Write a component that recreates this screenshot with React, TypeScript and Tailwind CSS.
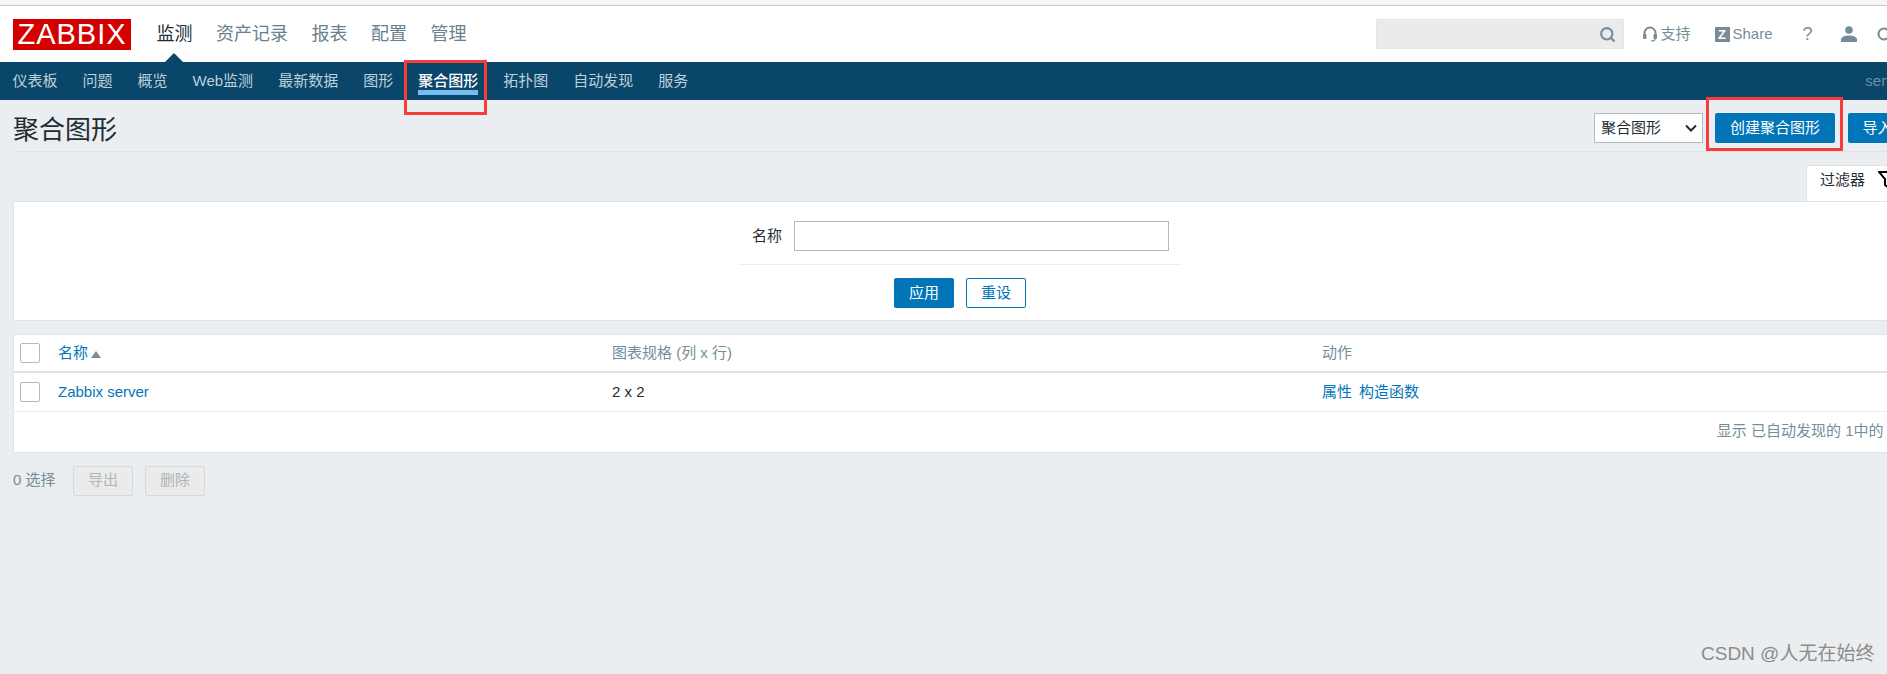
import { Search } from "lucide-react"

const topMenu = ["监测", "资产记录", "报表", "配置", "管理"]
const subMenu = ["仪表板", "问题", "概览", "Web监测", "最新数据", "图形", "聚合图形", "拓扑图", "自动发现", "服务"]

export default function App() {
  return (
    <div className="relative w-[1887px] h-[674px] overflow-hidden whitespace-nowrap bg-[#ebeef0] text-[15px] text-[#1f2c33] font-['Liberation_Sans','Noto_Sans_CJK_SC',sans-serif]">
      <div className="h-[6px] bg-[#f6f6f6] border-b border-[#c8c8c8]" />

      {/* top menu */}
      <header className="relative h-[56px] bg-white flex items-center pl-[13px]">
        <div className="shrink-0 w-[118px] h-[31px] bg-[#d40000] flex items-center justify-center text-white text-[29px] leading-none tracking-[1px]">
          ZABBIX
        </div>
        <nav className="shrink-0 flex ml-[25.5px] gap-[23.5px] text-[18px] text-[#69808d]">
          {topMenu.map((m, i) => (
            <a key={m} className={i === 0 ? "text-[#1f2c33]" : ""}>
              {m}
            </a>
          ))}
        </nav>
        <div className="absolute left-[165px] bottom-0 w-0 h-0 border-x-[9px] border-x-transparent border-b-[9px] border-b-[#0a466a]" />
        <div className="shrink-0 ml-[909px] w-[248px] h-[30px] bg-[#ebebeb] border border-[#e5e5e5] flex items-center justify-end pr-[7px]">
          <Search size={17} strokeWidth={3} className="text-[#768d99]" />
        </div>
        <div className="shrink-0 flex items-center ml-[19px] text-[#768d99] text-[15px]">
          <svg width="14" height="16" viewBox="0 0 14 16" fill="none">
            <path d="M1.5 10V7a5.5 5.5 0 0 1 11 0v3" stroke="#768d99" strokeWidth="2" />
            <rect x="0" y="8" width="3.5" height="5" rx="1" fill="#768d99" />
            <rect x="10.5" y="8" width="3.5" height="5" rx="1" fill="#768d99" />
            <path d="M12 13c0 1.5-2 2-4 2" stroke="#768d99" strokeWidth="1.2" />
          </svg>
          <span className="ml-[4px]">支持</span>
          <span className="ml-[24px] w-[15px] h-[15px] bg-[#768d99] text-white text-[13px] font-bold leading-[15px] text-center">
            Z
          </span>
          <span className="ml-[3px] text-[15px]">Share</span>
          <span className="ml-[30px] text-[18px] w-[10px]">?</span>
          <svg className="ml-[28px]" width="16" height="16" viewBox="0 0 16 16" fill="#768d99">
            <circle cx="8" cy="4" r="3.8" />
            <path d="M0 16v-2.5C0 11 4 9.5 8 9.5s8 1.5 8 4V16z" />
          </svg>
          <svg className="ml-[20px] shrink-0" width="14" height="16" viewBox="0 0 14 16" fill="none" stroke="#768d99" strokeWidth="2">
            <circle cx="7" cy="8" r="5.5" />
          </svg>
        </div>
      </header>

      {/* sub menu */}
      <nav className="h-[38px] w-[1907px] bg-[#0a466a] flex items-center text-[15px] text-[#bdd0da]">
        {subMenu.map((m) => (
          <a key={m} className={m === "聚合图形" ? "relative px-[12.5px] text-white font-medium" : "px-[12.5px]"}>
            {m}
            {m === "聚合图形" && <span className="absolute left-[12.5px] right-[12.5px] top-[20px] h-[5px] bg-[#74bdee]" />}
          </a>
        ))}
        <span className="ml-auto text-[#6f8fa3]">server</span>
      </nav>

      {/* title */}
      <div className="ml-[13px] w-[1894px] h-[52px] pt-[5px] flex items-center justify-between border-b border-[#dfe4e7]">
        <h1 className="text-[26px] leading-none mt-[4px]">聚合图形</h1>
        <div className="flex items-center">
          <div className="relative">
            <select className="block appearance-none w-[109px] h-[30px] bg-white border border-[#acbbc2] pl-[6px] text-[15px] text-[#1f2c33]">
              <option>聚合图形</option>
            </select>
            <svg className="absolute right-[6px] top-[11px]" width="12" height="8" viewBox="0 0 12 8" fill="none" stroke="#1f2c33" strokeWidth="2">
              <path d="M1 1.5l5 5 5-5" />
            </svg>
          </div>
          <button className="ml-[12px] w-[120px] h-[30px] rounded-[2px] bg-[#0275b8] text-white">创建聚合图形</button>
          <button className="ml-[13px] w-[59px] h-[30px] rounded-[2px] bg-[#0275b8] text-white">导入</button>
        </div>
      </div>

      {/* filter tab */}
      <div className="ml-[13px] w-[1894px] mt-[13px] flex justify-end">
        <div className="w-[101px] h-[36px] bg-white border-t border-l border-[#dfe4e7] rounded-tl-[2px] flex items-start pl-[13px] pt-[3px]">
          <span>过滤器</span>
          <svg className="ml-[13px] mt-[2px] shrink-0" width="18" height="18" viewBox="0 0 18 18" fill="none" stroke="#000" strokeWidth="2">
            <path d="M1 1h16l-6 7v9l-4-3V8z" />
          </svg>
        </div>
      </div>
      <section className="ml-[13px] w-[1894px] h-[120px] bg-white border border-[#dfe4e7] flex flex-col items-center pt-[19px]">
        <div className="w-[442px]">
          <div className="flex items-center pl-[13px] pb-[13px] border-b border-[#ebeef0]">
            <label className="w-[30px]">名称</label>
            <input className="ml-[12px] w-[375px] h-[30px] bg-white border border-[#acbbc2]" />
          </div>
          <div className="flex justify-center gap-[12px] mt-[13px]">
            <button className="w-[60px] h-[30px] rounded-[2px] bg-[#0275b8] text-white">应用</button>
            <button className="w-[60px] h-[30px] rounded-[2px] bg-white border border-[#0275b8] text-[#0275b8]">重设</button>
          </div>
        </div>
      </section>

      {/* table */}
      <div className="ml-[13px] w-[1894px] mt-[13px] bg-white border border-[#dfe4e7]">
        <table className="w-full table-fixed">
          <colgroup>
            <col className="w-[44px]" />
            <col className="w-[554px]" />
            <col className="w-[710px]" />
            <col />
          </colgroup>
          <thead>
            <tr className="h-[37px] border-b-2 border-[#dfe4e7] text-left text-[#768d99]">
              <th className="font-normal pl-[6px]">
                <div className="w-[20px] h-[20px] border border-[#acbbc2] rounded-[2px]" />
              </th>
              <th className="font-normal">
                <a className="text-[#0275b8]">名称</a>
                <span className="inline-block ml-[3px] w-0 h-0 border-x-[5px] border-x-transparent border-b-[7px] border-b-[#768d99]" />
              </th>
              <th className="font-normal">图表规格 (列 x 行)</th>
              <th className="font-normal">动作</th>
            </tr>
          </thead>
          <tbody>
            <tr className="h-[39px] border-b border-[#ebeef0]">
              <td className="pl-[6px]">
                <div className="w-[20px] h-[20px] border border-[#acbbc2] rounded-[2px]" />
              </td>
              <td>
                <a className="text-[#0275b8]">Zabbix server</a>
              </td>
              <td>2 x 2</td>
              <td className="text-[#0275b8]">
                <a>属性</a>
                <a className="ml-[7px]">构造函数</a>
              </td>
            </tr>
          </tbody>
        </table>
        <div className="h-[40px] flex items-center justify-end pr-[10px] text-[#768d99]">显示 已自动发现的 1中的 1</div>
      </div>

      {/* actions */}
      <div className="ml-[13px] mt-[13px] flex items-center text-[#768d99]">
        <span className="w-[42px]">0 选择</span>
        <button className="ml-[18px] w-[60px] h-[30px] rounded-[2px] bg-[#ebebeb] border border-[#d5dadd] text-[#acb6bb]">导出</button>
        <button className="ml-[12px] w-[60px] h-[30px] rounded-[2px] bg-[#ebebeb] border border-[#d5dadd] text-[#acb6bb]">删除</button>
      </div>

      {/* annotations */}
      <div className="absolute left-[404px] top-[60px] w-[83px] h-[55px] border-[3px] border-[#f73c3c]" />
      <div className="absolute left-[1706px] top-[97px] w-[137px] h-[54px] border-[3px] border-[#f73c3c]" />
      <div className="absolute left-[1701px] top-[642px] text-[19px] leading-[24px] text-[#8b8b8b]">CSDN @人无在始终</div>
    </div>
  )
}
